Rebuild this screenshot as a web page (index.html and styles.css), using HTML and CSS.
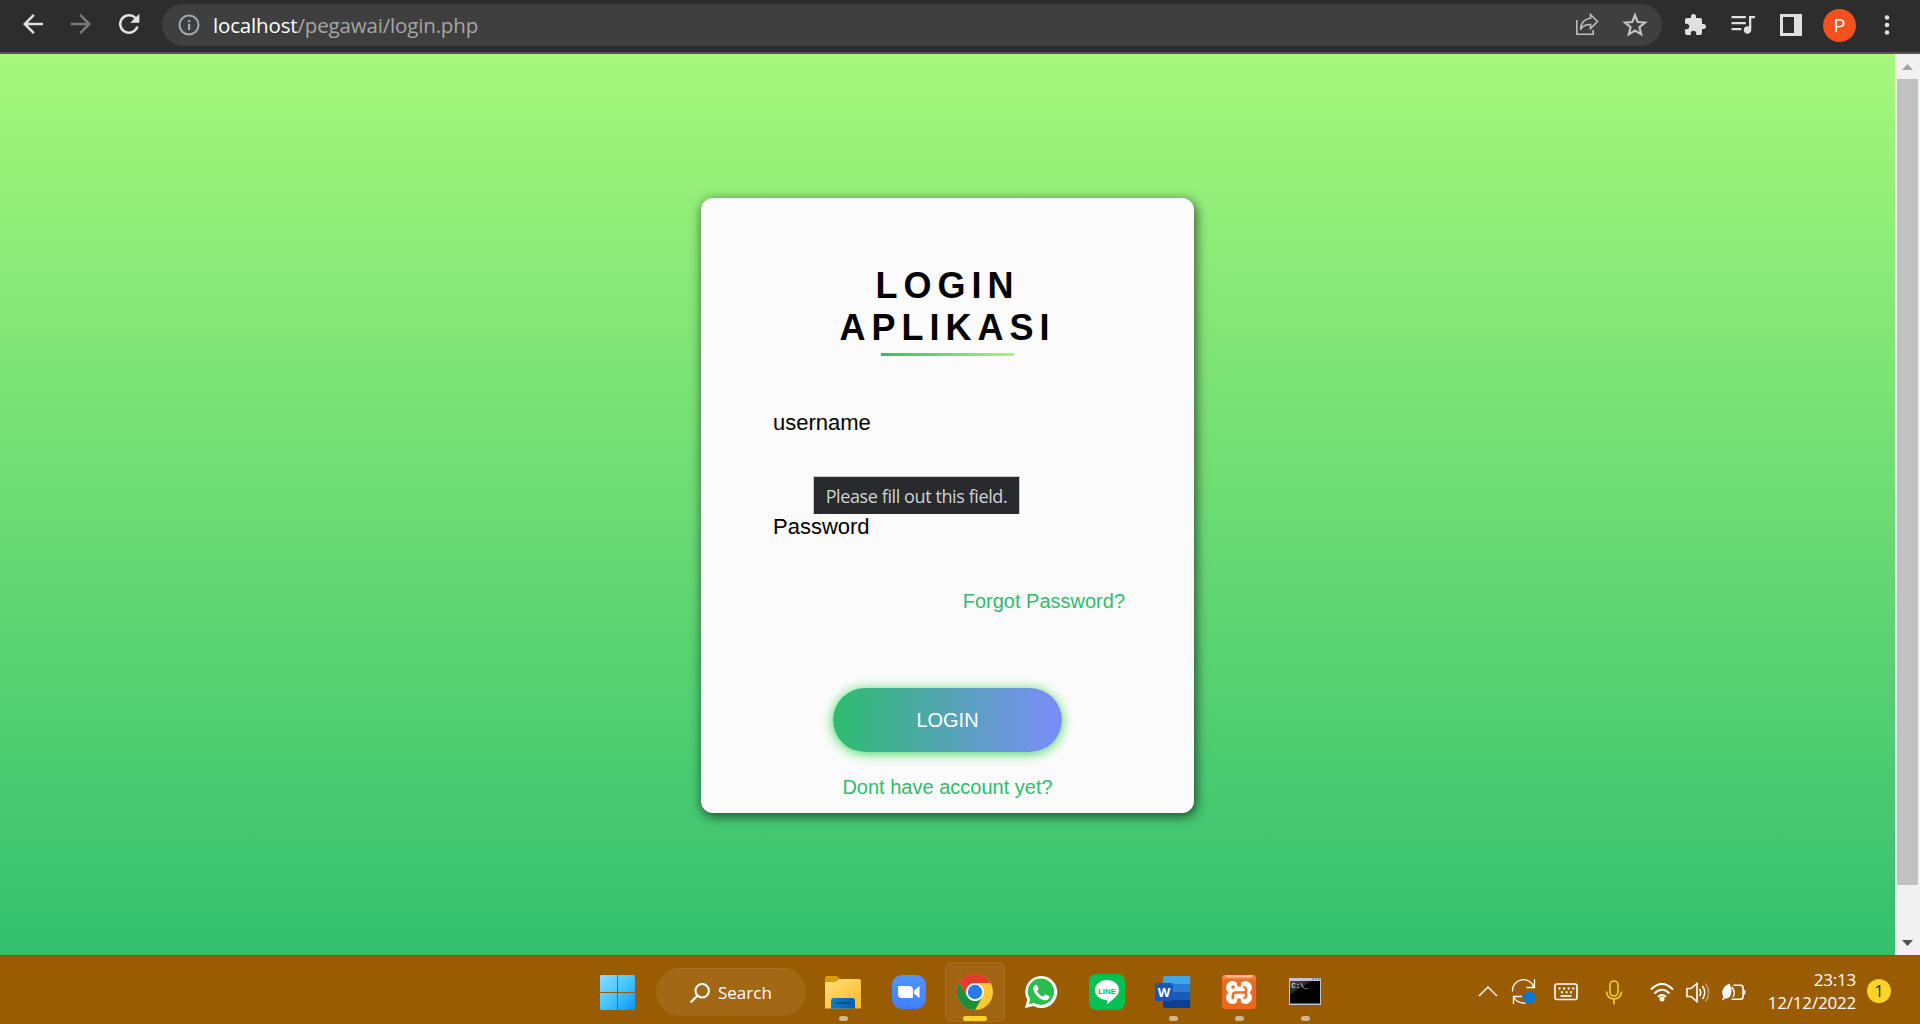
FILE: index.html
```html
<!DOCTYPE html>
<html lang="id">
<head>
<meta charset="utf-8">
<title>Login</title>
<link rel="stylesheet" href="styles.css">
</head>
<body>
<header class="toolbar">
  <nav class="nav">
    <svg viewBox="0 0 24 24"><path d="M20 11H7.8l5.6-5.6L12 4l-8 8 8 8 1.4-1.4L7.8 13H20z"/></svg>
    <svg class="off" viewBox="0 0 24 24"><path d="M4 11h12.2l-5.6-5.6L12 4l8 8-8 8-1.4-1.4 5.6-5.6H4z"/></svg>
    <svg viewBox="0 0 24 24"><path d="M17.65 6.35A8 8 0 1 0 19.73 14h-2.08A6 6 0 1 1 12 6c1.66 0 3.14.69 4.22 1.78L13 11h7.3V3.7z"/></svg>
  </nav>
  <div class="omnibox">
    <svg class="info" viewBox="0 0 22 22"><circle cx="11" cy="11" r="9.5" fill="none" stroke="#a4a8ad" stroke-width="2"/><path fill="#a4a8ad" d="M10 9.7h2.2V16H10zM10 6h2.2v2H10z"/></svg>
    <span class="url"><b>localhost</b>/pegawai/login.php</span>
    <svg class="share" viewBox="0 0 24 24"><path fill="none" stroke="#bdbdbd" stroke-width="1.6" d="M1.8 7v14.2h16.4V17M15.5 1.5l7 7-7 7v-4c-5 0-8 1.600-10 5 .4-6 3.500-10.500 10-11.200z"/></svg>
    <svg class="star" viewBox="0 0 24 24"><path fill="none" stroke="#c4c4c4" stroke-width="2" d="M12 3l2.500 6.200 6.700.5-5.100 4.300 1.600 6.600-5.700-3.500-5.700 3.500 1.600-6.600-5.100-4.300 6.700-.5z"/></svg>
  </div>
  <div class="actions">
    <svg viewBox="0 0 24 24"><path d="M20.500 11H19V7a2 2 0 0 0-2-2h-4V3.500a2.500 2.500 0 0 0-5 0V5H4a2 2 0 0 0-2 2v3.800h1.500a2.700 2.700 0 0 1 0 5.400H2V20a2 2 0 0 0 2 2h3.800v-1.500a2.700 2.700 0 0 1 5.400 0V22H17a2 2 0 0 0 2-2v-4h1.500a2.500 2.500 0 0 0 0-5z"/></svg>
    <svg viewBox="0 0 24 24"><path d="M.5 3h14.300v2.200H.5zm0 6h14.300v2.200H.5zm0 6h9.800v2.200H.5z"/><path d="M18 3h6v2.300h-3.700V17a3.800 3.800 0 1 1-2.300-3.500z"/></svg>
    <svg viewBox="0 0 24 24"><path fill-rule="evenodd" d="M1 1h22v22H1zM4 4v16h11V4z"/></svg>
    <span class="avatar">P</span>
    <svg viewBox="0 0 24 24"><circle cx="12" cy="4.500" r="2.300"/><circle cx="12" cy="12" r="2.300"/><circle cx="12" cy="19.500" r="2.300"/></svg>
  </div>
</header>

<div class="viewport">
  <main class="page">
    <form class="card">
      <h1 class="title">LOGIN<br>APLIKASI</h1>
      <div class="underline"></div>
      <label class="label user">username</label>
      <label class="label pass">Password</label>
      <a class="link forgot">Forgot Password?</a>
      <button class="submit" type="button">LOGIN</button>
      <a class="link signup">Dont have account yet?</a>
      <div class="tooltip">Please fill out this field.</div>
    </form>
  </main>
  <aside class="scrollbar">
    <svg viewBox="0 0 25 25"><path fill="#a3a3a3" d="M7 16h11l-5.500-6z"/></svg>
    <div class="thumb"></div>
    <svg viewBox="0 0 25 25"><path fill="#505050" d="M7 10h11l-5.500 6z"/></svg>
  </aside>
</div>

<footer class="taskbar">
  <div class="dock">
    <svg class="start" viewBox="0 0 35 35">
      <defs><linearGradient id="win" x1="0" y1="0" x2="35" y2="35" gradientUnits="userSpaceOnUse"><stop offset="0" stop-color="#8bdcff"/><stop offset=".5" stop-color="#45c6ff"/><stop offset="1" stop-color="#0a93ff"/></linearGradient></defs>
      <path fill="url(#win)" d="M1 0h16v17H0V1zM18 0h16l1 1v16H18zM0 18h17v17H1l-1-1zM18 18h17v16l-1 1H18z"/>
    </svg>
    <div class="search">
      <svg viewBox="0 0 20 20"><g fill="none" stroke="#fff" stroke-width="2"><circle cx="12.200" cy="7.800" r="6.700"/><path stroke-linecap="round" stroke-width="2.200" d="M7.300 12.700L1.300 18.700"/></g></svg>
      <span>Search</span>
    </div>
    <div class="app running">
      <svg viewBox="0 0 36 36">
        <defs><linearGradient id="fold" x2="1" y2="1"><stop offset="0" stop-color="#ffe07c"/><stop offset="1" stop-color="#f9b826"/></linearGradient><linearGradient id="tray"><stop offset="0" stop-color="#0c7dcf"/><stop offset="1" stop-color="#085fae"/></linearGradient></defs>
        <path fill="#dc9b04" d="M0 4q0-2 2-2h10l3 3h-2l-3 4H0z"/>
        <path fill="url(#fold)" d="M0 8h10l4-3h20q2 0 2 2v27.500H0z"/>
        <path fill="url(#tray)" d="M6 34.500V27q0-3 3-3h18q3 0 3 3v7.500z"/><path stroke="#06467f" stroke-width="1.600" d="M11 29h14"/>
      </svg>
    </div>
    <div class="app">
      <svg viewBox="0 0 36 36"><defs><linearGradient id="zm" x2="0" y2="1"><stop offset="0" stop-color="#4f96ff"/><stop offset="1" stop-color="#417fff"/></linearGradient></defs><rect x="1" y="1" width="34" height="34" rx="10" fill="url(#zm)"/><path fill="#fff" d="M7 12h11q4 0 4 4v8H11q-4 0-4-4zM23 16.500l5.500-4.500v12L23 19.800z"/></svg>
    </div>
    <div class="app active">
      <svg viewBox="0 0 36 36">
        <circle cx="18" cy="18" r="18" fill="#fcc934"/>
        <path fill="#e33b2e" d="M2.410 9A18 18 0 0 1 33.590 9H18a9 9 0 0 0-7.800 13.500z"/>
        <path fill="#1e8e3e" d="M2.410 9A18 18 0 0 0 18 36l7.800-13.500a9 9 0 0 1-15.600 0z"/>
        <circle cx="18" cy="18" r="9" fill="#fff"/><circle cx="18" cy="18" r="7.200" fill="#2b78ea"/>
      </svg>
    </div>
    <div class="app">
      <svg viewBox="0 0 36 36">
        <path fill="#fff" d="M2 34l2.300-8.200A16 16 0 1 1 10.500 32z"/>
        <path fill="#29bd4b" d="M5.800 30.300l1.400-5A13.200 13.200 0 1 1 11.200 29z"/>
        <path fill="#fff" d="M12.500 10.700c-2.500 1.600-2.800 4.300-1.300 7.200 2.200 4.300 6 7.500 10.500 8.400 2.600.4 4.800-1.200 4.900-3.800l-4.200-2.200-2.200 2.300c-3-1.200-5.200-3.300-6.200-5.700l1.700-1.800-1.800-4.200z"/>
      </svg>
    </div>
    <div class="app">
      <svg viewBox="0 0 36 36"><rect width="36" height="36" rx="7" fill="#06c152"/><path fill="#fff" d="M18 6c6.800 0 12 4.400 12 10 0 5-5.500 9-12 14v-4c-7 0-12-4.400-12-10S11.200 6 18 6z"/><text class="line-text" x="18" y="19.500">LINE</text></svg>
    </div>
    <div class="app running">
      <svg viewBox="0 0 36 36">
        <path fill="#41a5ee" d="M10 2h24q1.300 0 1.300 1.300V10H8V4q0-2 2-2z"/><path fill="#2b7cd3" d="M8 10h27.300v8H8z"/><path fill="#185abd" d="M8 18h27.300v8H8z"/><path fill="#103f91" d="M8 26h27.300v6.500q0 1.500-1.300 1.500H10q-2 0-2-2z"/>
        <rect y="9" width="18" height="18" rx="1.500" fill="#1b55b8"/><text class="word-text" x="9" y="22.500">W</text>
      </svg>
    </div>
    <div class="app running">
      <svg viewBox="0 0 36 36">
        <defs><linearGradient id="xa" x2="0" y2="1"><stop offset="0" stop-color="#f3a064"/><stop offset=".2" stop-color="#e8691c"/><stop offset="1" stop-color="#ec6a1a"/></linearGradient></defs>
        <rect x=".5" y=".5" width="35" height="35" rx="4" fill="url(#xa)" stroke="#ba4c10"/><path fill="#f8bd91" d="M4 1h28l-2 2.500H6z"/>
        <g fill="#fff"><circle cx="11.500" cy="13.500" r="6.500"/><circle cx="24.500" cy="13.500" r="6.500"/><circle cx="11.500" cy="23.500" r="6.500"/><circle cx="24.500" cy="23.500" r="6.500"/><path d="M11 12h14v13H11z"/></g>
        <path fill="#f2701f" d="M16 7h4v4.500q-2 2.500-4 0zM16 30h4v-4.500q-2-2.500-4 0zM4 17.500l2.500 1L4 19.500zM32 17.500l-2.500 1 2.500 1z"/>
        <circle cx="12" cy="13" r="1.800" fill="#f2701f"/>
        <path fill="none" stroke="#f2701f" stroke-width="2.600" stroke-linecap="round" d="M11.800 24v-2.500q0-3 3-3H23M23.500 13c2.500 1.500 2.500 4.500 0 5.500 2.500 1 2.500 4 0 5.500"/>
      </svg>
    </div>
    <div class="app running">
      <svg viewBox="0 0 36 36">
        <defs><linearGradient id="cmd" x2=".6" y2=".7"><stop offset="0" stop-color="#555"/><stop offset=".5" stop-color="#222"/><stop offset=".52" stop-color="#000"/></linearGradient></defs>
        <rect x="2" y="4" width="32" height="27" fill="#c2c6cc"/><path fill="#3f67a2" d="M25 4.500h2v1h-2zm3 0h2v1h-2zm3 0h2v1h-2z"/><rect x="3" y="7" width="30" height="22.500" fill="url(#cmd)"/><text class="cmd-text" x="4.500" y="13.500">C:\_</text>
      </svg>
    </div>
  </div>
  <div class="tray">
    <svg class="chevron" viewBox="0 0 24 24"><path d="M3 16l9-9 9 9"/></svg>
    <svg class="sync" viewBox="0 0 26 26"><path d="M1.500 12.500A11 11 0 0 1 23 8.500M23.500 0v8.500H15.500M11 17.500H2.500V25M2.500 18c2.500 4.500 6 6.500 12 6"/><circle class="dot" cx="18.500" cy="18.500" r="6"/></svg>
    <svg class="keyboard" viewBox="0 0 24 24"><rect x="1" y="4" width="22" height="15.500" rx="2"/><path stroke-width="2" stroke-dasharray="2 2.600" d="M4.500 8.500h16M7 12.200h11"/><path d="M6.500 16h11"/></svg>
    <svg class="mic" viewBox="0 0 24 24"><rect x="8" y="1" width="8" height="15" rx="4"/><path d="M4.500 11.500c0 10 15 10 15 0M12 19v5.500"/></svg>
    <svg class="wifi" viewBox="0 0 24 24"><path d="M1 9.500q11-11 22 0M4.500 13.500q7.500-7.500 15 0M8 17q4-4 8 0"/><circle cx="12" cy="19" r="1.500" fill="#fff"/></svg>
    <svg class="volume" viewBox="0 0 24 24"><path d="M1 8.500h4l6-5v18l-6-5H1zM13.500 9q2.500 3.500 0 7M16.500 6q4.500 6.500 0 13"/><path opacity=".4" d="M19.500 3.500q6.500 9 0 18"/></svg>
    <svg class="battery" viewBox="0 0 24 24"><path d="M11.500 5.300h7q2.500 0 2.500 2.500v9q0 2.500-2.500 2.500h-9M22.500 10v4.500"/><path fill="#fff" stroke="none" d="M7.500 3.500Q12 12 7 17.500q-2.500 1.500-4.500 1L1 20.500l-1-1 1.500-2.500C-1.500 11 1 6.500 7.500 3.500z"/><path stroke-width="1.400" d="M10 7q4 6 1 10"/></svg>
    <div class="clock"><span>23:13</span><span>12/12/2022</span></div>
    <span class="count">1</span>
  </div>
</footer>
</body>
</html>
```
FILE: styles.css
```css
* { box-sizing: border-box; }
body {
  margin: 0;
  width: 1920px;
  height: 1024px;
  overflow: hidden;
  display: flex;
  flex-direction: column;
  font-family: "Liberation Sans", Arial, sans-serif;
}
svg { display: block; flex: none; }

/* Browser toolbar */
.toolbar {
  height: 54px;
  flex: none;
  display: flex;
  background: #2d2d2d;
  border-bottom: 2px solid #555;
  font-family: "Open Sans", sans-serif;
}
.nav { display: flex; gap: 18px; padding: 9px 0 0 18px; width: 162px; }
.nav svg { width: 30px; height: 30px; fill: #e2e2e2; }
.nav .off { fill: #7a7a7a; }
.omnibox {
  width: 1500px;
  height: 42px;
  margin-top: 4px;
  border-radius: 21px;
  background: #3f3f3f;
  display: flex;
  align-items: center;
  padding: 0 14px 0 16px;
}
.info { width: 22px; height: 22px; }
.url { flex: 1; margin-left: 13px; font-size: 20.5px; letter-spacing: -.16px; color: #a6a6a6; white-space: nowrap; }
.url b { font-weight: 400; color: #fff; }
.share { width: 24px; height: 24px; margin-right: 23px; }
.star { width: 26px; height: 26px; }
.actions { display: flex; align-items: center; padding: 0 0 3px 21px; gap: 24px; }
.actions svg { width: 24px; height: 24px; fill: #e0e0e0; }
.avatar {
  width: 33px;
  height: 33px;
  margin: 2px -4px 0 -4px;
  border-radius: 50%;
  background: #f4511e;
  color: #fff;
  font: 18px/33px Roboto, sans-serif;
  text-align: center;
}
.actions svg:last-child { margin-left: -1px; }

/* Page content */
.viewport { height: 901px; flex: none; display: flex; overflow: hidden; }
.page {
  width: 1895px;
  height: 951px;
  padding-top: 144px;
  background: linear-gradient(#a6f77b, #2dbd6e);
}
.card {
  position: relative;
  width: 493px;
  height: 615px;
  margin: 0 auto;
  border-radius: 12px;
  background: #fbfbfb;
  box-shadow: 1.5px 3px 12px rgba(0, 0, 0, .65);
  display: flex;
  flex-direction: column;
  align-items: center;
}
.title { margin: 67px 0 0; font-size: 36px; line-height: 42px; letter-spacing: 6px; text-align: center; }
.underline { width: 133px; height: 3px; margin-top: 4px; background: linear-gradient(to right, #2ec06f, #a6f77b); }
.label { align-self: flex-start; margin-left: 72px; font-size: 22px; line-height: 26px; color: #000; }
.user { margin-top: 54px; }
.pass { margin-top: 78px; }
.link { font-size: 20px; line-height: 24px; color: #2dbd6e; }
.forgot { align-self: flex-end; margin: 49px 69px 0 0; }
.submit {
  width: 229px;
  height: 64px;
  margin-top: 75px;
  flex: none;
  border: 0;
  border-radius: 32px;
  background: linear-gradient(to right, #2dbd6e, #7b8cfa);
  box-shadow: 0 1.5px 12px #3cd557;
  color: #fff;
  font: 20px "Liberation Sans", Arial, sans-serif;
}
.signup { margin-top: 23px; }
.tooltip {
  position: absolute;
  left: 112px;
  top: 278px;
  width: 207px;
  height: 38px;
  border: 1px solid #c9c9d0;
  border-bottom: 0;
  background: #292a2d;
  color: #d0d2d6;
  font: 18px/38px "Open Sans", sans-serif;
  letter-spacing: -.4px;
  text-align: center;
  white-space: nowrap;
}
.scrollbar { width: 25px; background: #f1f1f1; display: flex; flex-direction: column; }
.scrollbar svg { width: 25px; height: 25px; }
.thumb { height: 806px; margin: 0 2px 45px; background: #c1c1c1; }

/* Taskbar */
.taskbar { height: 69px; display: flex; justify-content: space-between; background: #995c03; border-top: 1px solid #8c5203; color: #fff; font-family: "Open Sans", sans-serif; }
.dock { display: flex; padding-left: 600px; }
.start { width: 35px; height: 35px; margin: 19px 21px 0 0; }
.search {
  width: 150px;
  height: 48px;
  margin: 12px 4px 0 0;
  border-radius: 24px;
  background: #a36816;
  border-top: 1px solid #aa7020;
  display: flex;
  align-items: center;
  gap: 8px;
  padding-left: 34px;
  font-size: 17px;
}
.search svg { width: 20px; height: 20px; }
.app { position: relative; width: 60px; height: 60px; margin: 6px 3px 0; border-radius: 6px; padding: 12px; }
.app svg { width: 36px; height: 36px; }
.active { background: #a06413; box-shadow: inset 0 0 0 1px #a86e23; }
.running::after, .active::after {
  content: "";
  position: absolute;
  left: 26px;
  top: 54px;
  width: 9px;
  height: 5px;
  border-radius: 3px;
  background: #d2b58c;
}
.active::after { left: 18px; width: 24px; background: #ffd42a; }
.line-text { font: bold 8px "Liberation Sans", sans-serif; fill: #06c152; text-anchor: middle; }
.word-text { font: bold 13px "Open Sans", sans-serif; fill: #fff; text-anchor: middle; }
.cmd-text { font: 7px "Liberation Mono", monospace; fill: #fff; }
.tray { display: flex; align-items: center; padding: 0 29px 0 0; }
.tray svg { width: 24px; height: 24px; margin-bottom: -3px; fill: none; stroke: #fff; stroke-width: 1.6; overflow: visible; }
.tray .chevron { stroke-width: 1.3; }
.tray .sync { width: 26px; height: 26px; margin-left: 11px; stroke-width: 1.3; }
.sync .dot { fill: #0078d7; stroke: none; }
.tray .keyboard { margin-left: 17px; }
.tray .mic { margin-left: 24px; stroke: #f3cf3b; }
.tray .wifi { margin-left: 24px; stroke-width: 2; }
.tray .volume, .tray .battery { margin-left: 12px; }
.clock { width: 110px; display: flex; flex-direction: column; align-items: flex-end; font-size: 17px; line-height: 23px; letter-spacing: -.2px; margin-top: 2px; }
.count { width: 24px; height: 24px; margin: 2px 0 0 11px; border-radius: 50%; background: #ffd42a; color: #222; font-size: 16px; line-height: 24px; text-align: center; }
```
